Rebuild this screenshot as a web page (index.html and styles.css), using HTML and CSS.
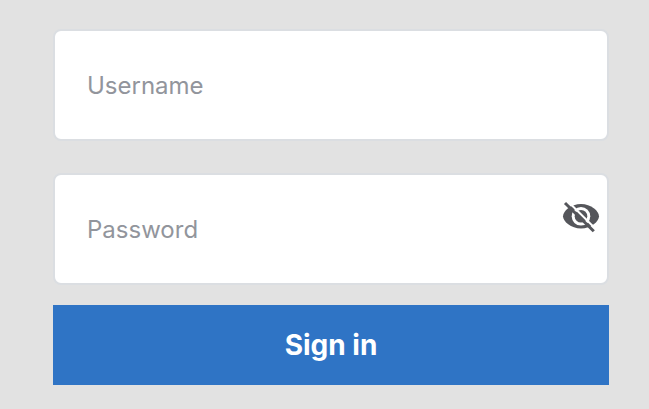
FILE: index.html
```html
<!DOCTYPE html>
<html lang="en">
<head>
<meta charset="utf-8">
<meta name="viewport" content="width=device-width, initial-scale=1">
<title>Sign in</title>
<link rel="stylesheet" href="styles.css">
</head>
<body>
<form class="login">
  <div class="field">
    <input class="field-input" type="text" placeholder="Username" aria-label="Username">
  </div>
  <div class="field">
    <input class="field-input" type="password" placeholder="Password" aria-label="Password">
    <button class="toggle" type="button" aria-label="Show password">
      <svg class="toggle-icon" viewBox="0 0 40 40" aria-hidden="true">
        <path class="ink" d="M2 19.3C2 14 10 7 20 7S38 14 38 19.3C38 24.500 30 31.600 20 31.600S2 24.500 2 19.300Z"/>
        <circle class="gap" cx="20" cy="19.300" r="9.300"/>
        <circle class="ink" cx="20" cy="19.300" r="6.300"/>
        <path class="gap-line" d="M7 4.500 35 32.200"/>
        <path class="slash" d="M4 6 32.800 34.300"/>
      </svg>
    </button>
  </div>
  <button class="submit" type="submit">Sign in</button>
</form>
</body>
</html>
```

FILE: styles.css
```css
* {
  box-sizing: border-box;
}

body {
  margin: 0;
  background: #e2e2e2;
  font-family: Inter, "Liberation Sans", sans-serif;
}

.login {
  display: flex;
  flex-direction: column;
  padding: 29px 40px 24px 53px;
}

.field {
  position: relative;
  display: flex;
  margin-bottom: 32px;
}

.field + .field {
  margin-bottom: 20px;
}

.field-input {
  width: 100%;
  height: 112px;
  padding: 0 32px;
  border: 2px solid #dbdee2;
  border-radius: 8px;
  background: #fff;
  color: #333;
  font: 400 24px/32px Inter, "Liberation Sans", sans-serif;
}

.field-input::placeholder {
  color: #92959c;
  opacity: 1;
}

.toggle {
  position: absolute;
  top: 24px;
  right: 8px;
  display: flex;
  padding: 0;
  border: 0;
  background: none;
}

.toggle-icon {
  width: 40px;
  height: 40px;
}

.ink {
  fill: #55565b;
}

.gap {
  fill: #fff;
}

.gap-line {
  stroke: #fff;
  stroke-width: 2;
}

.slash {
  stroke: #55565b;
  stroke-width: 3;
}

.submit {
  height: 80px;
  border: 0;
  background: #2f74c5;
  color: #fff;
  font: 700 28px/32px Inter, "Liberation Sans", sans-serif;
}
```
